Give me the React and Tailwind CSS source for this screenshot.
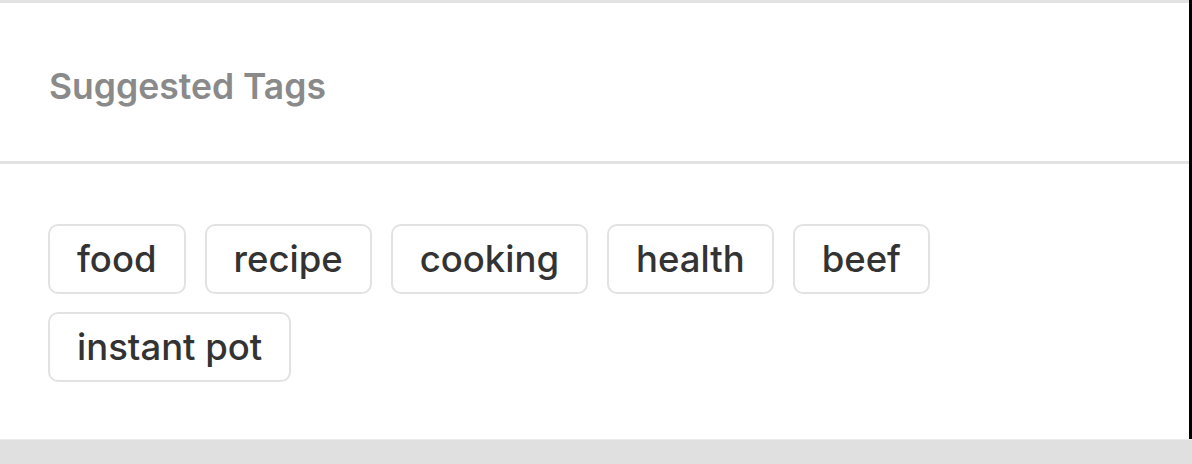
import React from 'react';

const tags = ['food', 'recipe', 'cooking', 'health', 'beef', 'instant pot'];

export default function App() {
  return (
    <div className="w-[1192px] h-[464px] overflow-hidden bg-white flex flex-col" style={{ fontFamily: 'Inter, "Noto Sans", sans-serif' }}>
      <div className="flex-1 flex flex-col border-r-[3px] border-black">
        {/* header */}
        <div className="border-t-[3px] border-[#e2e2e2] h-[161px] flex items-center px-[49px] pt-[10px]">
          <h2 className="text-[35.5px] font-semibold text-[#8a8a8a] leading-none">Suggested Tags</h2>
        </div>
        <div className="h-[3px] bg-[#e2e2e2]" />

        {/* tags */}
        <div className="flex-1 px-[48px] pt-[60px]">
          <div className="flex flex-wrap gap-x-[19px] gap-y-[18px] w-[900px]">
            {tags.map(t => (
              <span
                key={t}
                className="h-[70px] px-[27px] flex items-center border-2 border-[#e2e2e2] rounded-[10px] text-[36.5px] font-medium text-[#333333] leading-none"
              >
                {t}
              </span>
            ))}
          </div>
        </div>
      </div>
      <div className="h-[1px] bg-[#ececec]" />
      <div className="h-[24px] bg-[#e0e0e0]" />
    </div>
  );
}
